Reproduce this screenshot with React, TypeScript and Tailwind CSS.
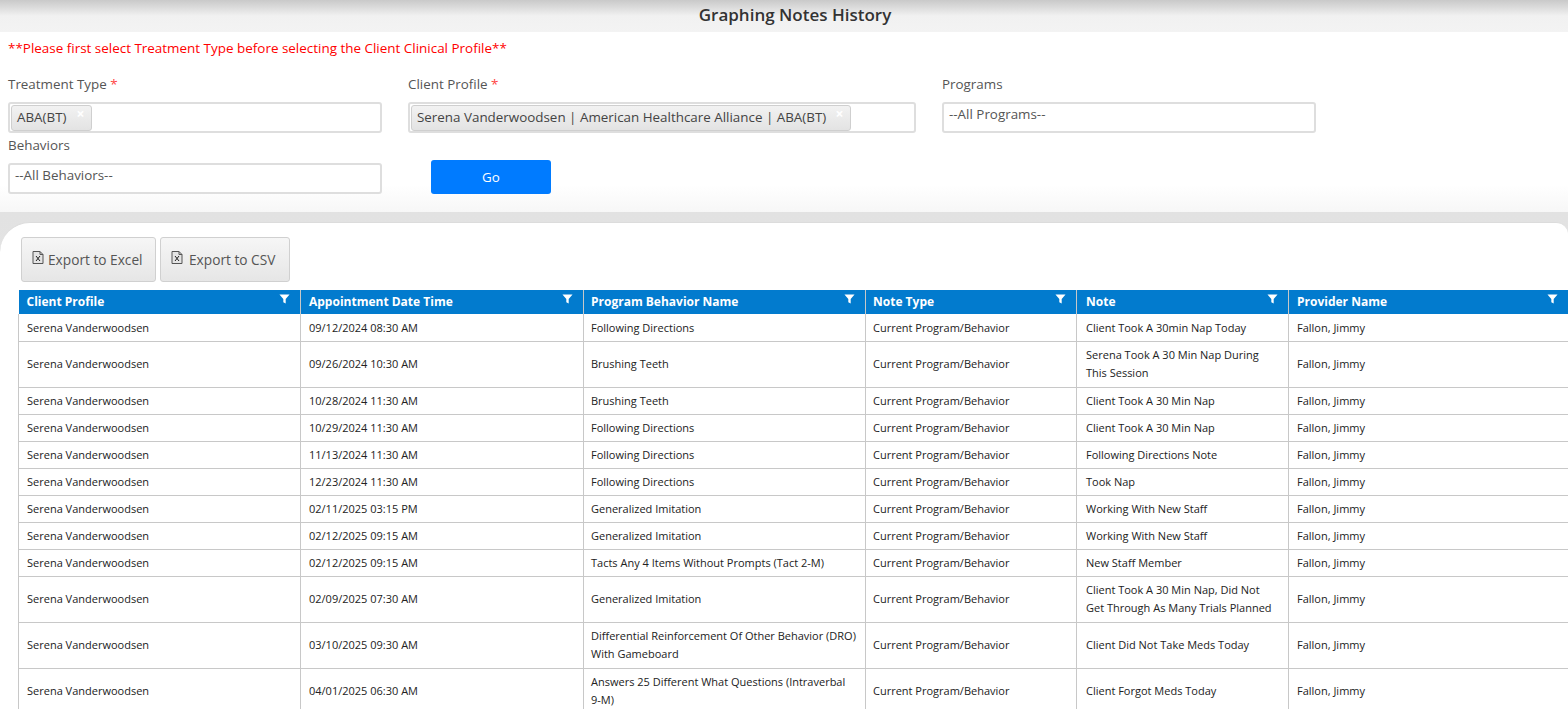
const rows = [
  { date: '09/12/2024 08:30 AM', program: ['Following Directions'], note: ['Client Took A 30min Nap Today'], h: 'h-[27px] [&>td]:pt-[1px]' },
  { date: '09/26/2024 10:30 AM', program: ['Brushing Teeth'], note: ['Serena Took A 30 Min Nap During', 'This Session'], h: 'h-[46px]' },
  { date: '10/28/2024 11:30 AM', program: ['Brushing Teeth'], note: ['Client Took A 30 Min Nap'], h: 'h-[27px]' },
  { date: '10/29/2024 11:30 AM', program: ['Following Directions'], note: ['Client Took A 30 Min Nap'], h: 'h-[27px]' },
  { date: '11/13/2024 11:30 AM', program: ['Following Directions'], note: ['Following Directions Note'], h: 'h-[27px]' },
  { date: '12/23/2024 11:30 AM', program: ['Following Directions'], note: ['Took Nap'], h: 'h-[27px]' },
  { date: '02/11/2025 03:15 PM', program: ['Generalized Imitation'], note: ['Working With New Staff'], h: 'h-[27px]' },
  { date: '02/12/2025 09:15 AM', program: ['Generalized Imitation'], note: ['Working With New Staff'], h: 'h-[27px]' },
  { date: '02/12/2025 09:15 AM', program: ['Tacts Any 4 Items Without Prompts (Tact 2-M)'], note: ['New Staff Member'], h: 'h-[27px]' },
  { date: '02/09/2025 07:30 AM', program: ['Generalized Imitation'], note: ['Client Took A 30 Min Nap, Did Not', 'Get Through As Many Trials Planned'], h: 'h-[46px]' },
  { date: '03/10/2025 09:30 AM', program: ['Differential Reinforcement Of Other Behavior (DRO)', 'With Gameboard'], note: ['Client Did Not Take Meds Today'], h: 'h-[46px]' },
  { date: '04/01/2025 06:30 AM', program: ['Answers 25 Different What Questions (Intraverbal', '9-M)'], note: ['Client Forgot Meds Today'], h: 'h-[46px]' },
]

const columns = [
  { label: 'Client Profile', pad: 'pl-[8px]' },
  { label: 'Appointment Date Time', pad: 'pl-[8px]' },
  { label: 'Program Behavior Name', pad: 'pl-[7px]' },
  { label: 'Note Type', pad: 'pl-[7px]' },
  { label: 'Note', pad: 'pl-[9px]' },
  { label: 'Provider Name', pad: 'pl-[8px]' },
]

const cell = 'border-x border-[#c8c8c8]'

function Lines({ lines }: { lines: string[] }) {
  return (
    <>
      {lines.map((l) => (
        <div key={l} className="whitespace-nowrap">
          {l}
        </div>
      ))}
    </>
  )
}

function FilterIcon() {
  return (
    <svg viewBox="0 0 12 12" className="absolute top-[3px] right-[10px] h-[12px] w-[11px] fill-white">
      <path d="M0.5 1h11L7.3 6v5L4.7 9.500V6z" />
    </svg>
  )
}

function ExcelIcon() {
  return (
    <svg viewBox="0 0 12 13" className="mt-[-5px] h-[13px] w-[12px] shrink-0 fill-none stroke-[#555]">
      <path d="M1 .5h7l3 3v9h-10z" fill="#e4e4e4" />
      <path d="M8 .5v3h3" />
      <path d="M4 5l4 5M8 5l-4 5" stroke="#222" />
    </svg>
  )
}

function ExportButton({ label, w, gap }: { label: string; w: string; gap: string }) {
  return (
    <button className={`flex h-[45px] ${w} ${gap} items-center rounded-[3px] border border-[#d0d0d0] bg-gradient-to-b from-[#f6f6f6] to-[#e6e6e6] pl-[10px] text-[13.7px] text-[#555]`}>
      <ExcelIcon />
      <span className="pt-[2px]">{label}</span>
    </button>
  )
}

function Chip({ label, w }: { label: string; w: string }) {
  return (
    <div className={`relative m-[0.5px] flex h-[26px] ${w} items-center rounded-[3px] border border-[#cfcfcf] bg-gradient-to-b from-[#f2f2f2] to-[#e3e3e3] pl-[5.500px] text-[13.4px] whitespace-nowrap text-[#444]`}>
      {label}
      <span className="absolute top-[-3px] right-[6px] text-[14px] font-bold text-white">×</span>
    </div>
  )
}

function Field({ label, required, w, children }: { label: string; required?: boolean; w: string; children: React.ReactNode }) {
  return (
    <div className={w}>
      <div className="h-[20px] text-[13.4px] leading-[20px] text-[#555]">
        {label}
        {required ? <span className="text-[#f44]"> *</span> : null}
      </div>
      {children}
    </div>
  )
}

const boxClass = 'mt-[8px] h-[31px] rounded-[3px] border-2 border-[#dedede] bg-white'

export default function App() {
  return (
    <div className="h-[709px] w-[1568px] overflow-hidden bg-white font-['Open_Sans','Noto_Sans',sans-serif]">
      <div className="h-[32px] bg-gradient-to-b from-[#c9c9c9] via-[#f1f1f1] to-[#f3f3f3] pt-[4px] pl-[22px] text-center text-[17px] leading-[21px] font-semibold text-[#333]">
        Graphing Notes History
      </div>

      <div className="h-[180px] bg-gradient-to-b from-white from-[85%] to-[#f7f7f7] px-[8px]">
        <div className="pt-[7px] text-[13.45px] leading-[18px] text-[#f00]">
          **Please first select Treatment Type before selecting the Client Clinical Profile**
        </div>
        <div className="mt-[17px] flex">
          <Field label="Treatment Type" required w="w-[374px]">
            <div className={boxClass}>
              <Chip label="ABA(BT)" w="w-[81px]" />
            </div>
          </Field>
          <Field label="Client Profile" required w="ml-[26px] w-[508px]">
            <div className={boxClass}>
              <Chip label="Serena Vanderwoodsen | American Healthcare Alliance | ABA(BT)" w="w-[440px]" />
            </div>
          </Field>
          <Field label="Programs" w="ml-[26px] w-[374px]">
            <div className={`${boxClass} pl-[5px] text-[13.4px] leading-[20px] text-[#555]`}>--All Programs--</div>
          </Field>
        </div>
        <div className="mt-[2px] flex">
          <Field label="Behaviors" w="w-[374px]">
            <div className={`${boxClass} mt-[6px] pl-[5px] text-[13.4px] leading-[20px] text-[#555]`}>--All Behaviors--</div>
          </Field>
          <button className="mt-[25px] ml-[49px] h-[34px] w-[120px] rounded-[3px] bg-[#007bff] text-[13.4px] text-white">Go</button>
        </div>
      </div>

      <div className="h-[497px] bg-gradient-to-b from-[#e2e2e2] to-[#ededed] pt-[10px]">
        <div className="h-full rounded-tl-[30px] rounded-tr-[12px] border-t border-[#dcdcdc] bg-white pt-[14px] pl-[18px]">
          <div className="flex gap-[4px] pl-[3px]">
            <ExportButton label="Export to Excel" w="w-[135px]" gap="gap-[4px]" />
            <ExportButton label="Export to CSV" w="w-[130px]" gap="gap-[6px]" />
          </div>
          <table className="mt-[8px] w-[1550px] table-fixed border-collapse text-[11px] text-[#222]">
            <colgroup>
              <col className="w-[282px]" />
              <col className="w-[283px]" />
              <col className="w-[282px]" />
              <col className="w-[211px]" />
              <col className="w-[212px]" />
              <col className="w-[280px]" />
            </colgroup>
            <thead>
              <tr className="h-[24px] bg-[#027bce] text-white">
                {columns.map((c) => (
                  <th key={c.label} className={`relative ${cell} ${c.pad} text-left text-[12px] font-bold first:border-l-0`}>
                    {c.label}
                    <FilterIcon />
                  </th>
                ))}
              </tr>
            </thead>
            <tbody>
              {rows.map((r, i) => (
                <tr key={i} className={`${r.h} border-b border-[#c8c8c8] leading-[18px]`}>
                  <td className={`${cell} pl-[8px]`}>Serena Vanderwoodsen</td>
                  <td className={`${cell} pl-[8px]`}>{r.date}</td>
                  <td className={`${cell} pl-[7px]`}>
                    <Lines lines={r.program} />
                  </td>
                  <td className={`${cell} pl-[7px]`}>Current Program/Behavior</td>
                  <td className={`${cell} pl-[9px]`}>
                    <Lines lines={r.note} />
                  </td>
                  <td className={`${cell} pl-[8px]`}>Fallon, Jimmy</td>
                </tr>
              ))}
            </tbody>
          </table>
        </div>
      </div>
    </div>
  )
}
